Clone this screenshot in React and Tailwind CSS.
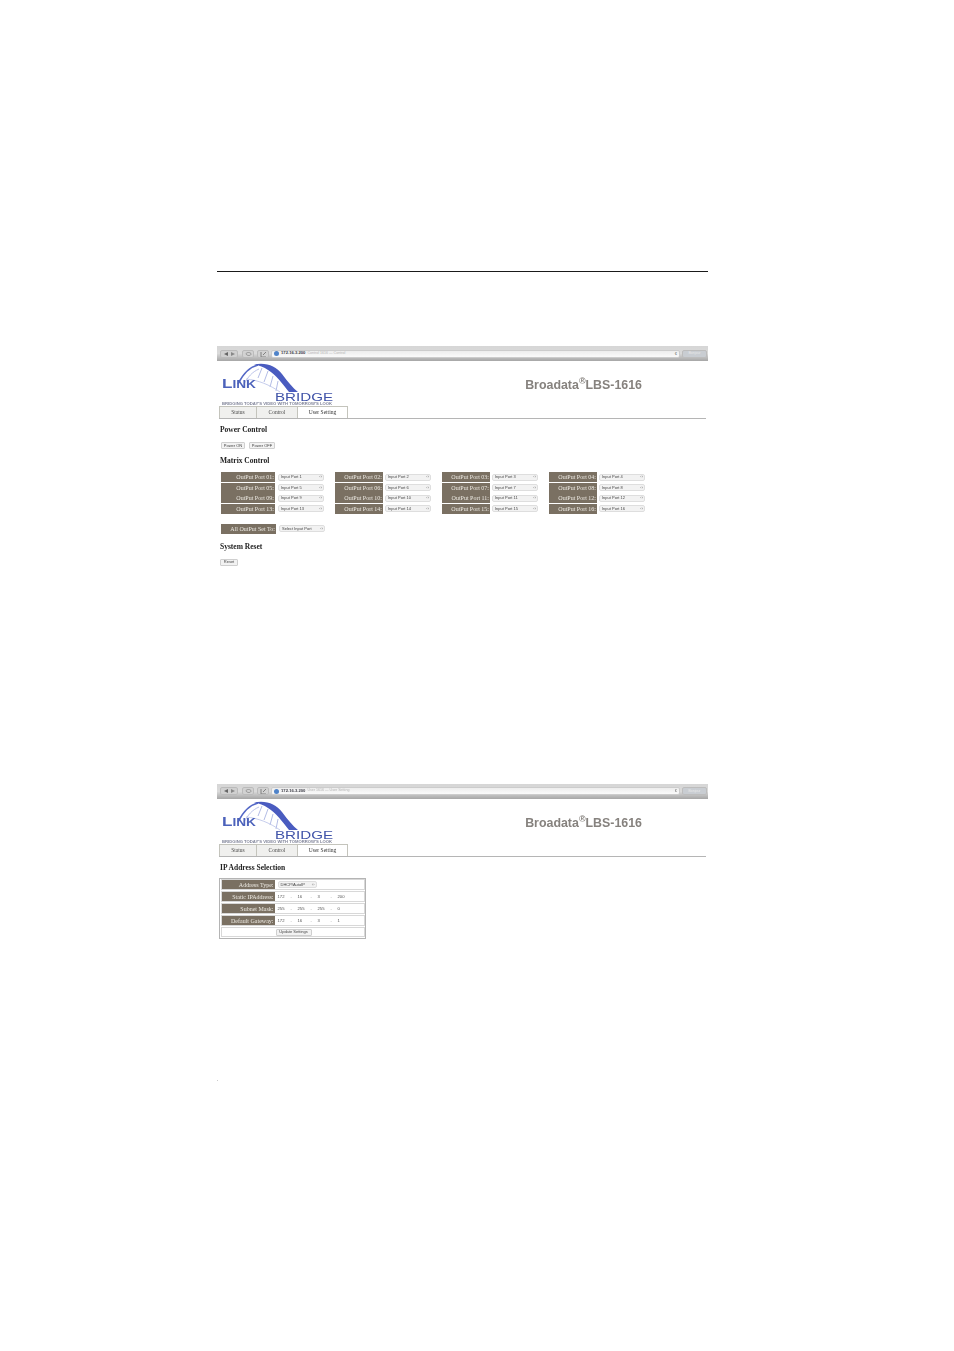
const serif = "font-['Liberation_Serif',serif]";
const sans = "font-['Liberation_Sans',Arial,sans-serif]";

function Logo() {
  return (
    <svg width="116" height="45" viewBox="0 0 116 45" className="shrink-0">
      <path d="M20 23 C25 13 31 6 40 4" fill="none" stroke="#5468c6" strokeWidth="1.5" />
      <path d="M26 23 C30 16 34 11 41 8" fill="none" stroke="#b4bde6" strokeWidth="0.9" />
      <path d="M36 3.5 C48 1 58 5 64 13 C70 21 75 27 80 31 L71 31 C64 22 58 14 50 9 C46 6 41 4.5 36 3.5 Z" fill="#4a5cc0" />
      <path d="M44 7 L40 17 M50 10 L46 21 M55 15 L52 26 M60 20 L58 30" stroke="#aab4e2" strokeWidth="0.9" />
      <path d="M28 18 C40 19 52 24 62 31" fill="none" stroke="#c0c7ea" strokeWidth="0.9" />
      <text x="4" y="27" fontSize="10" fontWeight="700" fill="#4c62bb" textLength="34" lengthAdjust="spacingAndGlyphs" fontFamily="Liberation Sans, sans-serif"><tspan fontSize="12.5">L</tspan>INK</text>
      <text x="57" y="40" fontSize="11" fill="#3f52a8" textLength="58" lengthAdjust="spacingAndGlyphs" fontFamily="Liberation Sans, sans-serif">BRIDGE</text>
      <text x="4" y="44" fontSize="2.6" fontWeight="700" fill="#808499" textLength="110" lengthAdjust="spacingAndGlyphs" fontFamily="Liberation Sans, sans-serif">BRIDGING TODAY'S VIDEO WITH TOMORROW'S LOOK</text>
    </svg>
  );
}

function BrowserBar({ title }) {
  return (
    <div className={`h-[15px] w-full flex items-center gap-[2px] pl-[3px] pr-[1px] bg-gradient-to-b from-[#d6d6d6] via-[#dadada] to-[#a6a6a6] ${sans}`}>
      <div className="w-[18px] h-[8px] bg-[#d0d0d0] border border-[#bbbbbb] rounded-[2px] flex items-center justify-center gap-[3px]">
        <svg width="4" height="4" viewBox="0 0 4 4"><path d="M4 0 L0 2 L4 4 Z" fill="#666666" /></svg>
        <svg width="4" height="4" viewBox="0 0 4 4"><path d="M0 0 L4 2 L0 4 Z" fill="#888888" /></svg>
      </div>
      <div className="ml-[2px] w-[12px] h-[8px] bg-[#d2d2d2] border border-[#bbbbbb] rounded-[2px] flex items-center justify-center">
        <svg width="7" height="6" viewBox="0 0 7 6"><path d="M1 3 C1 1 6 1 6 3 C6 5 2 5 1 3 Z" fill="none" stroke="#888888" strokeWidth="0.8" /></svg>
      </div>
      <div className="ml-[1px] w-[12px] h-[8px] bg-[#d2d2d2] border border-[#bbbbbb] rounded-[2px] flex items-center justify-center">
        <svg width="7" height="6" viewBox="0 0 7 6"><path d="M1 1 L1 6 L6 6 M3 4 L6 1" fill="none" stroke="#777777" strokeWidth="0.9" /></svg>
      </div>
      <div className="flex-1 h-[8px] bg-gradient-to-b from-[#ededed] to-[#fafafa] border border-[#cccccc] rounded-[2px] flex items-center pl-[2px] gap-[2px] min-w-0">
        <span className="w-[5px] h-[5px] rounded-full bg-[#4f83c9] shrink-0" />
        <span className="text-[4.2px] leading-none font-bold text-[#3c3c46] whitespace-nowrap">172.16.3.200</span>
        <span className="text-[3.6px] leading-none text-[#b4b4b4] whitespace-nowrap">{title}</span>
        <span className="ml-auto mr-[2px] text-[4px] leading-none text-[#666666]">¢</span>
      </div>
      <div className="w-[25px] h-[8px] bg-[#c9cdd2] border border-[#bdbdbd] rounded-[2px] flex items-center justify-center text-[3.5px] leading-none text-[#e8e8e8]">Bonjour</div>
    </div>
  );
}

function Header({ title }) {
  return (
    <div>
      <BrowserBar title={title} />
      <div className="h-[45px] flex items-center justify-between pl-[1px] pr-[66px]">
        <Logo />
        <div className={`pt-[3px] text-[12.4px] leading-none font-bold text-[#86827e] whitespace-nowrap ${sans}`}>
          Broadata<sup className="text-[9px] font-bold">®</sup>LBS-1616
        </div>
      </div>
      <div className={`ml-[2px] mr-[2px] h-[13px] flex border-b border-[#b5b5b5] text-[5.5px] text-[#4a4a4a] ${serif}`}>
        <div className="w-[38px] bg-[#f0f0ee] border border-b-0 border-[#c4c4bc] flex items-center justify-center">Status</div>
        <div className="w-[41px] bg-[#f0f0ee] border-r border-t border-[#c4c4bc] flex items-center justify-center">Control</div>
        <div className="w-[50px] bg-white border-r border-t border-[#c4c4bc] flex items-center justify-center text-[#333333]">User Setting</div>
      </div>
    </div>
  );
}

function Sel({ text, w = "w-[46px]" }) {
  return (
    <div className={`${w} h-[7px] bg-[#f2f2f2] border border-[#dedede] rounded-[2px] flex items-center justify-between pl-[2px] pr-[1px] text-[4px] leading-none text-[#444444] ${sans}`}>
      <span className="whitespace-nowrap">{text}</span>
      <span className="text-[#777777]">‹›</span>
    </div>
  );
}

function Label({ text, w }) {
  return (
    <div className={`${w} h-[10px] bg-[#7a7062] flex items-center justify-end pr-[1px] text-[6px] leading-none text-[#ece9e2] whitespace-nowrap ${serif}`}>{text}</div>
  );
}

function Btn({ text, w }) {
  return (
    <div className={`${w} h-[7px] bg-[#f2f2f2] border border-[#cfcfcf] rounded-[1px] flex items-center justify-center text-[4px] leading-none text-[#444444] ${sans}`}>{text}</div>
  );
}

function Heading({ text, className = "" }) {
  return <div className={`text-[7.5px] leading-[8px] font-bold text-[#222222] ${serif} ${className}`}>{text}</div>;
}

const pad = (n) => String(n).padStart(2, "0");

function Column({ start, labelW, gapW }) {
  return (
    <div className="flex flex-col gap-[0.6px]">
      {[0, 4, 8, 12].map((off) => (
        <div key={off} className={`flex items-center ${gapW}`}>
          <Label text={`OutPut Port ${pad(start + off)}:`} w={labelW} />
          <Sel text={`Input Port ${start + off}`} />
        </div>
      ))}
    </div>
  );
}

function ControlPage() {
  return (
    <div>
      <Header title="Control 1616 — Control" />
      <div className="pl-[3px]">
        <Heading text="Power Control" className="mt-[7px]" />
        <div className="flex gap-[4px] mt-[8px] pl-[1px]">
          <Btn text="Power ON" w="w-[24px]" />
          <Btn text="Power OFF" w="w-[26px]" />
        </div>
        <Heading text="Matrix Control" className="mt-[8px]" />
        <div className="flex gap-[11px] mt-[7px] pl-[1px]">
          <Column start={1} labelW="w-[54px]" gapW="gap-[3px]" />
          <Column start={2} labelW="w-[48px]" gapW="gap-[2px]" />
          <Column start={3} labelW="w-[48px]" gapW="gap-[2px]" />
          <Column start={4} labelW="w-[48px]" gapW="gap-[2px]" />
        </div>
        <div className="flex items-center gap-[3px] mt-[10px] pl-[1px]">
          <Label text="All OutPut Set To:" w="w-[55px]" />
          <Sel text="Select Input Port" />
        </div>
        <Heading text="System Reset" className="mt-[9px]" />
        <div className="mt-[8px]">
          <Btn text="Reset" w="w-[18px]" />
        </div>
      </div>
    </div>
  );
}

function Ip({ parts }) {
  return (
    <div className={`flex-1 flex items-center pl-[3px] text-[4.2px] leading-none text-[#555555] ${sans}`}>
      {parts.map((p, i) => (
        <div key={i} className="w-[20px] flex">
          <span className="w-[13px]">{p}</span>
          {i < 3 && <span>.</span>}
        </div>
      ))}
    </div>
  );
}

function IpRow({ label, children }) {
  return (
    <div className="h-[11px] flex border border-[#d8d8d8] bg-white">
      <div className={`w-[53px] shrink-0 bg-[#7a7062] flex items-center justify-end pr-[1px] text-[6px] leading-none text-[#ece9e2] whitespace-nowrap ${serif}`}>{label}</div>
      {children}
    </div>
  );
}

function SettingPage() {
  return (
    <div>
      <Header title="User 1616 — User Setting" />
      <div className="pl-[3px]">
        <Heading text="IP Address Selection" className="mt-[7px]" />
        <div className="-ml-[1px] mt-[6px] w-[147px] h-[61px] border-[1.5px] border-[#b4b4b4] flex flex-col gap-[1px] p-[0.5px]">
          <IpRow label="Address Type:">
            <div className="pl-[3px] flex items-center">
              <Sel text="DHCP/AutoIP" w="w-[39px]" />
            </div>
          </IpRow>
          <IpRow label="Static IPAddress:"><Ip parts={["172", "16", "3", "200"]} /></IpRow>
          <IpRow label="Subnet Mask:"><Ip parts={["255", "255", "255", "0"]} /></IpRow>
          <IpRow label="Default Gateway:"><Ip parts={["172", "16", "3", "1"]} /></IpRow>
          <div className="h-[10px] border border-[#d8d8d8] flex items-center pl-[54px]">
            <Btn text="Update Settings" w="w-[36px]" />
          </div>
        </div>
      </div>
    </div>
  );
}

export default function App() {
  return (
    <div className="w-[954px] h-[1351px] bg-white overflow-hidden">
      <div className="ml-[217px] w-[491px] pt-[271px]">
        <div className="h-px bg-[#1a1a1a]" />
        <div className="blur-[0.5px]">
          <div className="pt-[74px]"><ControlPage /></div>
          <div className="mt-[218px]"><SettingPage /></div>
          <div className={`mt-[138px] text-[5px] leading-none text-[#333333] ${serif}`}>.</div>
        </div>
      </div>
    </div>
  );
}
